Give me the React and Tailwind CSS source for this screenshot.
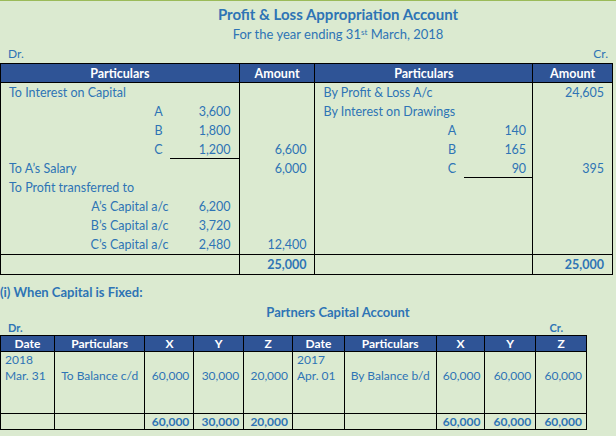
export default function App() {
  const f = { fontFamily: "Lato, 'Open Sans', sans-serif" };
  const txt = "text-[#2e74b5]";
  const R = ({ l, la, lv, amt, r, ra, rv, ramt, ul, rul, lcls = "", lind }) => (
    <div className="flex h-[19px] items-center">
      <div className="w-[239px] border-r border-black h-full flex items-center relative">
        {l && <span className={`pl-2 ${lcls}`}>{l}</span>}
        {la && <span className="absolute right-[76px]" style={{ right: lind ? 70 : 76 }}>{la}</span>}
        {lv && <span className="absolute right-[8px]">{lv}</span>}
        {ul && <div className="absolute right-0 bottom-0 w-[69px] border-b border-black" />}
      </div>
      <div className="w-[76px] border-r border-black h-full flex items-center justify-end pr-2">{amt}</div>
      <div className="w-[218px] border-r border-black h-full flex items-center relative">
        {r && <span className="pl-2">{r}</span>}
        {ra && <span className="absolute right-[76px]">{ra}</span>}
        {rv && <span className="absolute right-[6px]">{rv}</span>}
        {rul && <div className="absolute right-0 bottom-0 w-[68px] border-b border-black" />}
      </div>
      <div className="w-[79px] h-full flex items-center justify-end pr-2">{ramt}</div>
    </div>
  );
  const cw = [54, 91, 49, 50, 49, 52, 92, 49, 51, 50];
  const Row = ({ cells, h, cls = "", align = [] }) => (
    <div className={`flex border-b border-black ${cls}`} style={{ height: h }}>
      {cells.map((c, i) => (
        <div key={i} style={{ width: cw[i] }} className={`${i < 9 ? "border-r" : ""} border-black px-1 ${align[i] || "text-center"}`}>{c}</div>
      ))}
    </div>
  );
  return (
    <div style={f} className={`w-[616px] h-[436px] bg-[#dbead0] ${txt} text-[12.5px] leading-[19px] border-t border-[#9bbb59] relative overflow-hidden`}>
      <div className="text-center font-bold text-[15px] mt-[2px] leading-[22px] pl-[60px]">Profit &amp; Loss Appropriation Account</div>
      <div className="text-center text-[13px] pl-[60px]">For the year ending 31<sup className="text-[8px]">st</sup> March, 2018</div>
      <div className="flex justify-between px-2 text-[12px]"><span>Dr.</span><span>Cr.</span></div>
      <div className="w-[613px] border border-black">
        <div className="flex h-[19px] bg-[#2f5496] text-white font-bold border-b border-black">
          <div className="w-[239px] border-r border-black text-center">Particulars</div>
          <div className="w-[76px] border-r border-black text-center">Amount</div>
          <div className="w-[218px] border-r border-black text-center">Particulars</div>
          <div className="w-[79px] text-center">Amount</div>
        </div>
        <R l="To Interest on Capital" r="By Profit & Loss A/c" ramt="24,605" />
        <R la="A" lv="3,600" r="By Interest on Drawings" />
        <R la="B" lv="1,800" ra="A" rv="140" />
        <R la="C" lv="1,200" ul amt="6,600" ra="B" rv="165" />
        <R l="To A’s Salary" amt="6,000" ra="C" rv="90" rul ramt="395" />
        <R l="To Profit transferred to" />
        <R la="A’s Capital  a/c" lind lv="6,200" />
        <R la="B’s Capital  a/c" lind lv="3,720" />
        <R la="C’s Capital  a/c" lind lv="2,480" amt="12,400" />
        <div className="flex h-[20px] border-t border-black font-bold items-center">
          <div className="w-[239px] border-r border-black h-full" />
          <div className="w-[76px] border-r border-black h-full text-right pr-2">25,000</div>
          <div className="w-[218px] border-r border-black h-full" />
          <div className="w-[79px] h-full text-right pr-2">25,000</div>
        </div>
      </div>
      <div className="font-bold text-[13px] mt-[8px] leading-[18px]">(i) When Capital is Fixed:</div>
      <div className="text-center font-bold text-[13px] leading-[18px] mt-[2px] pl-[60px]">Partners Capital  Account</div>
      <div className="flex justify-between w-[587px] px-2 font-bold text-[11px] leading-[14px]"><span>Dr.</span><span className="pr-4">Cr.</span></div>
      <div className="w-[587px] border-l border-t border-r border-black text-[12px]">
        <Row h={16} cls="bg-[#2f5496] text-white font-bold leading-[15px]" cells={["Date","Particulars","X","Y","Z","Date","Particulars","X","Y","Z"]} />
        <Row h={62} cls="leading-[16px]" align={["text-left","text-center","text-right","text-right","text-right","text-left","text-center","text-right","text-right","text-right"]}
          cells={[<>2018<br/>Mar. 31</>,<><br/>To Balance c/d</>,<><br/>60,000</>,<><br/>30,000</>,<><br/>20,000</>,<>2017<br/>Apr. 01</>,<><br/>By Balance b/d</>,<><br/>60,000</>,<><br/>60,000</>,<><br/>60,000</>]} />
        <Row h={16} cls="font-bold leading-[15px]" align={["","","text-right","text-right","text-right","","","text-right","text-right","text-right"]}
          cells={["","","60,000","30,000","20,000","","","60,000","60,000","60,000"]} />
      </div>
    </div>
  );
}
